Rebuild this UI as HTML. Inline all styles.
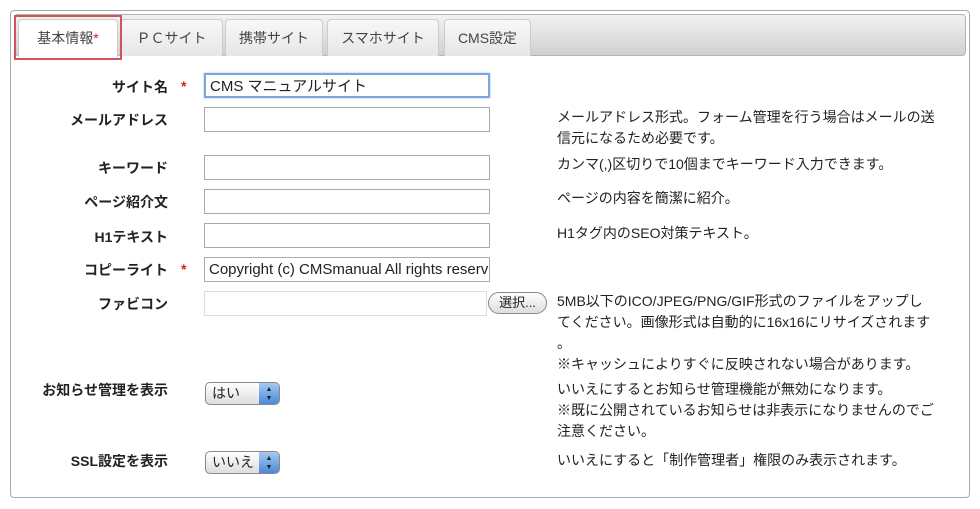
<!DOCTYPE html>
<html><head><meta charset="utf-8"><style>
*{box-sizing:border-box;margin:0;padding:0}
body{width:980px;height:509px;background:#fff;font-family:"Liberation Sans","Noto Sans CJK JP",sans-serif;font-size:14px;color:#222;position:relative;overflow:hidden}
.frame{position:absolute;left:10px;top:10px;width:960px;height:488px;border:1px solid #aaa;border-radius:4px}
.bar{position:absolute;left:14px;top:14px;width:952px;height:42px;border:1px solid #b5b5b5;border-radius:4px;background:linear-gradient(#f2f2f2,#d0d0d0)}
.tab{position:absolute;top:19px;height:37px;border:1px solid #ccc;border-bottom:none;border-radius:4px 4px 0 0;background:linear-gradient(#f8f8f8,#e6e6e6);text-align:center;line-height:36px;color:#444}
.tab.on{background:#fff;height:38px}
.red{position:absolute;left:14px;top:15px;width:108px;height:45px;border:2px solid #d0555a}
.lab{position:absolute;right:812px;font-weight:bold;white-space:nowrap;line-height:16px}
.ast{position:absolute;left:181px;color:#d02020;font-weight:bold}
.in{position:absolute;left:204px;width:286px;height:25px;border:1px solid #aaa;background:#fff;padding-left:4px;line-height:23px;font-size:15px;white-space:nowrap;overflow:hidden}
.help{position:absolute;left:557px;line-height:21px;width:395px}
.sel{position:absolute;left:205px;width:75px;height:23px;border:1px solid #888;border-radius:5px;background:linear-gradient(#fff,#ddd);padding-left:6px;line-height:21px;overflow:hidden}
.sel i{position:absolute;right:0;top:0;width:20px;height:21px;background:linear-gradient(#a8c8f0,#4a8ad8);font-size:7px;color:#123;text-align:center;line-height:9px;font-style:normal;padding-top:2px}
</style></head><body>
<div class="frame"></div>
<div class="bar"></div>
<div class="tab on" style="left:18px;width:100px">基本情報<span style="color:#d02020">*</span></div>
<div class="tab" style="left:120px;width:103px">ＰＣサイト</div>
<div class="tab" style="left:225px;width:98px">携帯サイト</div>
<div class="tab" style="left:327px;width:112px">スマホサイト</div>
<div class="tab" style="left:444px;width:87px">CMS設定</div>
<div class="red"></div>

<div class="lab" style="top:79px">サイト名</div><div class="ast" style="top:78px">*</div>
<div class="in" style="top:73px;border:2px solid #7ea6d8;box-shadow:0 0 2px #9bbbe6">CMS マニュアルサイト</div>

<div class="lab" style="top:112px">メールアドレス</div>
<div class="in" style="top:107px"></div>
<div class="help" style="top:107px">メールアドレス形式。フォーム管理を行う場合はメールの送<br>信元になるため必要です。</div>

<div class="lab" style="top:160px">キーワード</div>
<div class="in" style="top:155px"></div>
<div class="help" style="top:154px">カンマ(,)区切りで10個までキーワード入力できます。</div>

<div class="lab" style="top:194px">ページ紹介文</div>
<div class="in" style="top:189px"></div>
<div class="help" style="top:188px">ページの内容を簡潔に紹介。</div>

<div class="lab" style="top:229px">H1テキスト</div>
<div class="in" style="top:223px"></div>
<div class="help" style="top:223px">H1タグ内のSEO対策テキスト。</div>

<div class="lab" style="top:262px">コピーライト</div><div class="ast" style="top:261px">*</div>
<div class="in" style="top:257px">Copyright (c) CMSmanual All rights reserved</div>

<div class="lab" style="top:296px">ファビコン</div>
<div class="in" style="top:291px;width:283px;border-color:#ddd"></div>
<div style="position:absolute;left:488px;top:292px;width:59px;height:22px;border:1px solid #888;border-radius:11px;background:linear-gradient(#fff,#ddd);text-align:center;line-height:20px;font-size:13px">選択...</div>
<div class="help" style="top:291px">5MB以下のICO/JPEG/PNG/GIF形式のファイルをアップし<br>てください。画像形式は自動的に16x16にリサイズされます<br>。<br>※キャッシュによりすぐに反映されない場合があります。</div>

<div class="lab" style="top:382px">お知らせ管理を表示</div>
<div class="sel" style="top:382px">はい<i>▲<br>▼</i></div>
<div class="help" style="top:379px">いいえにするとお知らせ管理機能が無効になります。<br>※既に公開されているお知らせは非表示になりませんのでご<br>注意ください。</div>

<div class="lab" style="top:453px">SSL設定を表示</div>
<div class="sel" style="top:451px">いいえ<i>▲<br>▼</i></div>
<div class="help" style="top:450px">いいえにすると「制作管理者」権限のみ表示されます。</div>
</body></html>
